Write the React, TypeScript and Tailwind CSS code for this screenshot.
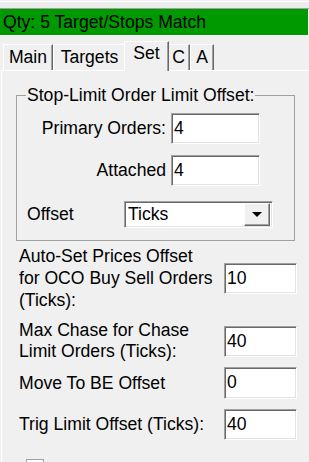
const font = "font-['Liberation_Sans',Arial,sans-serif]";

const Field: React.FC<{ value: string; className?: string }> = ({ value, className }) => (
  <div
    className={`h-[31px] bg-white border border-t-[#a0a0a0] border-l-[#a0a0a0] border-r-white border-b-white shadow-[inset_1px_1px_0_#696969,inset_-1px_-1px_0_#e3e3e3] pl-[2px] leading-[29px] ${className ?? ""}`}
  >
    {value}
  </div>
);

const Tab: React.FC<{ label: string; width: string; active?: boolean }> = ({ label, width, active }) => (
  <div
    className={`${width} ${
      active ? "h-[30px] -mb-[1px] -mx-[2px] relative z-10 pb-[5px]" : "h-[26px] pt-[1px]"
    } border-t border-l border-white border-r border-r-[#696969] shadow-[inset_-1px_0_0_#a0a0a0] bg-[#f0f0f0] flex items-center justify-center leading-none`}
  >
    {label}
  </div>
);

export default function App() {
  return (
    <div className={`w-[309px] h-[462px] overflow-hidden bg-[#f0f0f0] text-black text-[17.6px] ${font}`}>
      <div className="h-[1px]" />
      <div className="h-[1px] bg-white" />
      <div className="h-[6px] bg-[#ececec]" />
      <div className="h-[1px] bg-[#a0a0a0]" />
      <div className="h-[26px] w-[308px] bg-[#009900] pl-[3px] leading-[26px]">
        Qty: 5 Target/Stops Match
      </div>
      <div className="h-[1px] w-[308px] bg-white" />

      <div className="mt-[5px] h-[29px] flex items-end pl-[3px]">
        <Tab label="Main" width="w-[50px]" />
        <Tab label="Targets" width="w-[73px]" />
        <Tab label="Set" width="w-[45px]" active />
        <Tab label="C" width="w-[23px]" />
        <Tab label="A" width="w-[24px]" />
      </div>

      <div className="ml-[1px] border-t border-l border-white h-[400px]">
        <fieldset className="mt-[15px] ml-[14px] w-[279px] border border-[#a0a0a0] pt-[9px] pb-[12px]">
          <legend className="ml-[9px] px-[1px] leading-[18px]">Stop-Limit Order Limit Offset:</legend>
          <div className="flex items-center">
            <div className="w-[149px] text-right">Primary Orders:</div>
            <Field value="4" className="ml-[5px] w-[89px]" />
          </div>
          <div className="flex items-center mt-[11px]">
            <div className="w-[149px] text-right">Attached</div>
            <Field value="4" className="ml-[5px] w-[89px]" />
          </div>
          <div className="flex items-center mt-[15px]">
            <div className="w-[107px] pl-[10px]">Offset</div>
            <div className="w-[149px] h-[27px] bg-white border border-t-[#a0a0a0] border-l-[#a0a0a0] border-r-white border-b-white shadow-[inset_1px_1px_0_#696969,inset_-1px_-1px_0_#e3e3e3] flex items-center pl-[3px] pr-[2px]">
              <span className="flex-1 leading-none">Ticks</span>
              <div className="w-[26px] h-[23px] bg-[#f0f0f0] border border-t-white border-l-white border-r-[#696969] border-b-[#696969] shadow-[inset_-1px_-1px_0_#a0a0a0] flex items-center justify-center">
                <svg width="10" height="5" viewBox="0 0 10 5">
                  <polygon points="0,0 10,0 5,5" fill="#000" />
                </svg>
              </div>
            </div>
          </div>
        </fieldset>

        <div className="pl-[17px] pr-[12px]">
          <div className="flex items-center mt-[4px]">
            <div className="w-[205px] leading-[22px]">
              Auto-Set Prices Offset
              <br />
              for OCO Buy Sell Orders
              <br />
              (Ticks):
            </div>
            <Field value="10" className="w-[73px]" />
          </div>
          <div className="flex items-center mt-[9px]">
            <div className="w-[205px] leading-[21px]">
              Max Chase for Chase
              <br />
              Limit Orders (Ticks):
            </div>
            <Field value="40" className="w-[73px]" />
          </div>
          <div className="flex items-center mt-[5px]">
            <div className="w-[205px]">Move To BE Offset</div>
            <Field value="0" className="w-[73px] h-[32px]" />
          </div>
          <div className="flex items-center mt-[10px]">
            <div className="w-[205px]">Trig Limit Offset (Ticks):</div>
            <Field value="40" className="w-[73px]" />
          </div>
          <div className="mt-[19px] ml-[7px] w-[18px] h-[13px] bg-white border border-[#a0a0a0]" />
        </div>
      </div>
    </div>
  );
}
